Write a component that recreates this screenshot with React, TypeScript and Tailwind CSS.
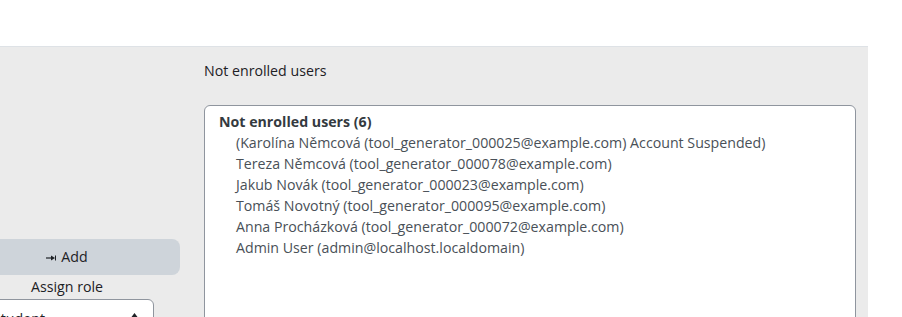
import React from "react";

const users = [
  "(Karolína Němcová (tool_generator_000025@example.com) Account Suspended)",
  "Tereza Němcová (tool_generator_000078@example.com)",
  "Jakub Novák (tool_generator_000023@example.com)",
  "Tomáš Novotný (tool_generator_000095@example.com)",
  "Anna Procházková (tool_generator_000072@example.com)",
  "Admin User (admin@localhost.localdomain)",
];

export default function App() {
  return (
    <div
      className="w-[902px] h-[317px] overflow-hidden bg-white flex flex-col"
      style={{ fontFamily: '"Open Sans", "Noto Sans", sans-serif' }}
    >
      <div className="h-[46px] shrink-0 bg-white" />
      <div className="flex-1 w-[868px] bg-[#ebebeb] border-t border-[#dee2e6] flex overflow-hidden">
        <div className="w-[226px] ml-[-46px] shrink-0 flex flex-col items-center pt-[192px]">
          <button className="shrink-0 w-[226px] h-[36px] rounded-[8px] bg-[#ced4da] text-[#1d2125] text-[14.2px] flex items-center justify-center gap-[5px]">
            <svg width="10" height="6" viewBox="0 0 10 6" className="mt-[1px]">
              <line x1="0" y1="3" x2="6" y2="3" stroke="#1d2125" strokeWidth="1.2" />
              <polygon points="5,0.5 9,3 5,5.5" fill="#1d2125" />
              <rect x="9" y="0.5" width="1" height="5" fill="#1d2125" />
            </svg>
            <span>Add</span>
          </button>
          <div className="shrink-0 text-[14.2px] text-[#1d2125] leading-[22px] mt-[1px]">Assign role</div>
          <div className="shrink-0 self-start mt-[1px] w-[200px] h-[38px] bg-white border border-[#8f959e] rounded-[6px] flex items-start justify-between pl-[38px] pr-[14px] pt-[8px] text-[14.2px] text-[#1d2125]">
            <span className="leading-[22px]">Student</span>
            <svg width="9" height="6" viewBox="0 0 9 6" className="mt-[5px]">
              <polygon points="0,6 4.5,0 9,6" fill="#1d2125" />
            </svg>
          </div>
        </div>
        <div className="ml-[24px] w-[652px] flex flex-col">
          <div className="shrink-0 pt-[13px] text-[14.2px] text-[#1d2125] leading-[22px]">Not enrolled users</div>
          <div className="shrink-0 mt-[23px] h-[260px] bg-white border border-[#8f959e] rounded-[6px] px-[14px] pt-[5px] text-[14.2px] text-[#495057] leading-[21px]">
            <div className="font-bold text-[#343a40]">Not enrolled users (6)</div>
            {users.map((u) => (
              <div key={u} className="pl-[17px]">
                {u}
              </div>
            ))}
          </div>
        </div>
      </div>
    </div>
  );
}
